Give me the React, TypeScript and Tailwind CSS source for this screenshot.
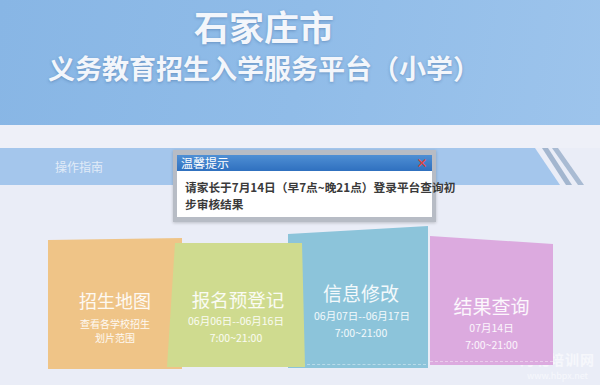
import React from "react";

const font = { fontFamily: '"Noto Sans CJK SC", "Noto Sans", sans-serif' };

export default function App() {
  return (
    <div
      className="relative w-[600px] h-[385px] overflow-hidden bg-[#eaedf7]"
      style={font}
    >
      {/* Header */}
      <div className="h-[125px] bg-[linear-gradient(100deg,#88b6e5_0%,#90bce8_50%,#9dc4ec_100%)] flex flex-col items-center pr-[72px] pt-[4px]">
        <div className="text-[35px] leading-[44px] font-bold text-[#f3f6fb] [text-shadow:0_1px_3px_rgba(60,100,150,0.45)]">
          石家庄市
        </div>
        <div className="text-[27px] leading-[36px] font-bold text-[#f3f6fb] [text-shadow:0_1px_3px_rgba(60,100,150,0.45)] mt-[2px] whitespace-nowrap">
          义务教育招生入学服务平台（小学）
        </div>
      </div>

      {/* light strip */}
      <div className="h-[23px] bg-[#eef0f8]" />

      {/* Band */}
      <div className="relative h-[37px]">
        <div className="w-[560px] h-full bg-[#a4c6ec] [clip-path:polygon(0_0,535px_0,560px_100%,0_100%)] flex items-center pl-[55px]">
          <span className="text-[12px] text-[#e8f0fa] opacity-90">操作指南</span>
        </div>
        <svg
          className="absolute left-[538px] top-0"
          width="52"
          height="37"
          viewBox="0 0 52 37"
        >
          <polygon points="4,0 10,0 34,37 28,37" fill="#a3b6cf" />
          <polygon points="14,0 20,0 46,37 40,37" fill="#a9bbd3" />
        </svg>
      </div>

      {/* Cards */}
      <div className="flex items-start pl-[48px]">
        {/* Orange */}
        <div className="relative z-0 mt-[53px] w-[134px] h-[131px] bg-[#efc487] [clip-path:polygon(0_2px,100%_0,100%_100%,0_100%)] flex flex-col items-center pt-[51px] text-white/90">
          <div className="text-[18px] leading-[22px]">招生地图</div>
          <div className="text-[10px] leading-[14px] mt-[6px]">查看各学校招生</div>
          <div className="text-[10px] leading-[14px]">划片范围</div>
        </div>
        {/* Green */}
        <div className="relative z-20 -ml-[15px] mt-[58px] w-[138px] h-[124px] bg-[#cfdb8f] [clip-path:polygon(8px_0,135px_0,100%_100%,0_100%)] flex flex-col items-center pt-[45px] text-white/90">
          <div className="text-[18.5px] leading-[22px] pl-[4px]">报名预登记</div>
          <div className="text-[10.5px] leading-[15px] mt-[3px]">06月06日--06月16日</div>
          <div className="text-[10.5px] leading-[15px] mt-[2px]">7:00~21:00</div>
        </div>
        {/* Blue */}
        <div className="relative z-10 -ml-[17px] mt-[41px] w-[140px] h-[142px] bg-[#8cc4da] [clip-path:polygon(0_8px,100%_0,100%_100%,0_100%)] flex flex-col items-center pt-[56px] text-white/90">
          <div className="text-[19px] leading-[22px] pl-[6px]">信息修改</div>
          <div className="text-[10.5px] leading-[15px] mt-[4px] pl-[8px]">06月07日--06月17日</div>
          <div className="text-[10.5px] leading-[15px] mt-[2px] pl-[6px]">7:00~21:00</div>
          <div className="absolute left-[14px] right-[2px] bottom-[3px] border-b border-dashed border-white/40" />
        </div>
        {/* Pink */}
        <div className="relative z-10 ml-[2px] mt-[51px] w-[123px] h-[129px] bg-[#dcaadf] [clip-path:polygon(0_0,100%_8px,100%_100%,0_100%)] flex flex-col items-center pt-[59px] text-white/90">
          <div className="text-[19px] leading-[22px]">结果查询</div>
          <div className="text-[10.5px] leading-[15px] mt-[3px]">07月14日</div>
          <div className="text-[10.5px] leading-[15px] mt-[2px]">7:00~21:00</div>
          <div className="absolute left-0 right-0 bottom-[3px] border-b border-dashed border-white/40" />
        </div>
      </div>

      {/* watermark */}
      <div className="absolute left-[520px] top-[350px] flex flex-col items-center text-white/55 pointer-events-none">
        <div className="text-[14px] leading-[18px] font-bold tracking-[1px]">河北培训网</div>
        <div className="text-[9px] leading-[12px] mt-[2px]">www.hbpx.net</div>
      </div>

      {/* Dialog */}
      <div className="absolute left-[173px] top-[150px] w-[263px] h-[72px] bg-[#b7bcc5] pt-[5px] px-[4px] pb-[5px] shadow-[0_1px_3px_rgba(0,0,0,0.2)]">
        <div className="h-[16px] bg-[linear-gradient(180deg,#4f8fd4,#2f70bf)] flex items-center justify-between px-[4px]">
          <span className="text-[12px] leading-[16px] text-white">温馨提示</span>
          <span className="text-[12px] leading-[12px] text-[#e0443a] font-bold">×</span>
        </div>
        <div className="h-[46px] bg-white pl-[8px] pt-[7px]">
          <div className="text-[11.7px] leading-[17px] font-bold text-[#3a3a3a] whitespace-nowrap">
            请家长于7月14日（早7点~晚21点）登录平台查询初
          </div>
          <div className="text-[11.7px] leading-[17px] font-bold text-[#3a3a3a] whitespace-nowrap">
            步审核结果
          </div>
        </div>
      </div>
    </div>
  );
}
